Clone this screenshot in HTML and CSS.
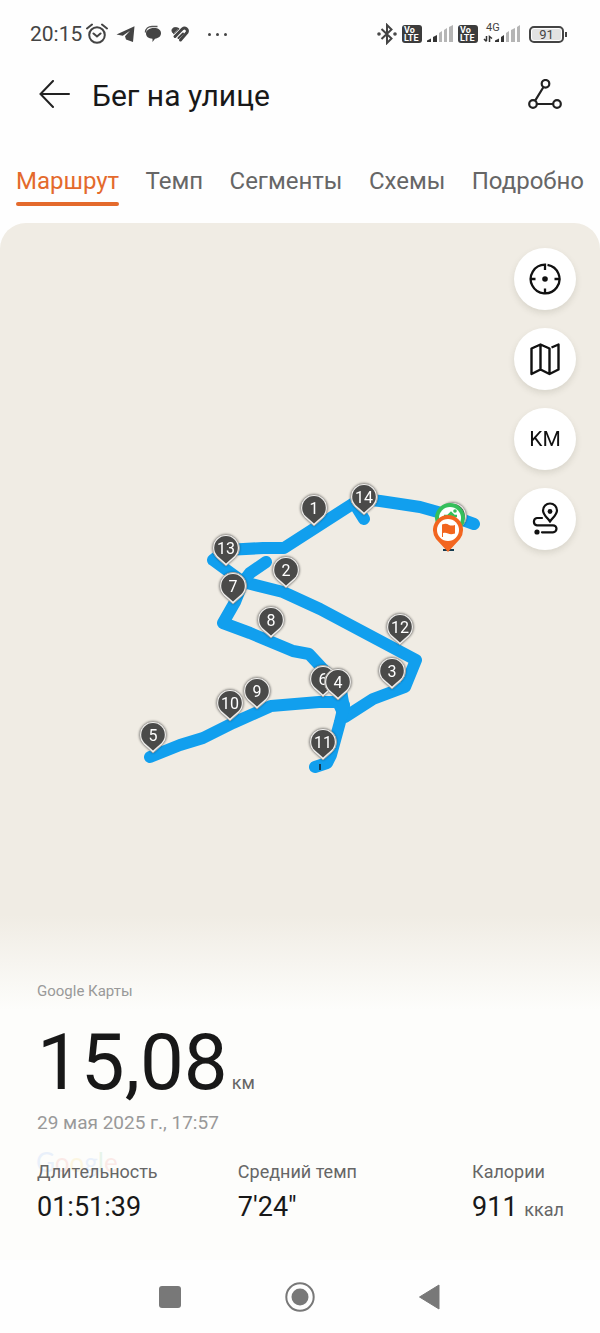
FILE: index.html
```html
<!DOCTYPE html>
<html lang="ru">

<head>
    <meta charset="UTF-8">
    <meta name="viewport" content="width=device-width, initial-scale=1.0">
    <title>Бег на улице</title>
    <link rel="stylesheet" href="styles.css">
</head>

<body>
    <div class="statusBar">
        <span class="clock">20:15</span>
        <div class="statusLeft">
            <!-- alarm -->
            <svg width="22" height="22" viewBox="0 0 22 22" fill="none" stroke="#444" stroke-width="2">
                <circle cx="11" cy="12" r="7.8" />
                <path d="M1 5.500 6 1.500M21 5.500 16 1.500M7.500 10.500l3.500 3 3.500-3" stroke-linecap="round" />
            </svg>
            <!-- telegram -->
            <svg width="20" height="18" viewBox="0 0 20 18" fill="#444">
                <path d="M.5 9.500 18.500 1.200 17 17 10 14.500 9 11.200 14 5.800 6.800 10.800Z" />
            </svg>
            <!-- chat -->
            <svg width="18" height="18" viewBox="0 0 18 18">
                <path d="M1.500 7.500C1.500 3.500 4.500 1.500 8 1.500h5.500" fill="none" stroke="#555" stroke-width="1.500" />
                <path d="M10 3c4.500 0 7 2 7 5.300 0 3-2.500 5-6 5.400L8.500 17v-3.200C4.500 13.500 2 11.500 2 8.500S5 3 10 3Z" fill="#444" />
            </svg>
            <!-- health -->
            <svg width="20" height="18" viewBox="0 0 20 18" fill="none" stroke="#444" stroke-width="3" stroke-linecap="round">
                <path d="M5 11.500 12.500 3.800c2.500-2 6 .5 4.500 3.700L10.500 15" />
                <path d="M8.500 13 13 8.500" stroke-width="2" />
                <path d="M3.500 8.500C-.5 5 3.500.500 8.800 3.500Z" fill="#444" stroke-width="1" />
            </svg>
            <span class="dots"><i></i><i></i><i></i></span>
        </div>
        <div class="statusRight">
            <!-- bluetooth -->
            <svg width="20" height="22" viewBox="0 0 20 22" fill="none" stroke="#444" stroke-width="2">
                <path d="M4.500 6 14.500 15.500 10 20V2l4.500 4.500L4.500 16" />
                <circle cx="2" cy="11" r=".8" />
                <circle cx="18" cy="11" r=".8" />
            </svg>
            <span class="volte"><span>Vo</span><span>LTE</span></span>
            <svg width="26" height="18" viewBox="0 0 26 18">
                <path d="M0 17v-1.500l4-2V17ZM6 17v-5l4-2v7Z" fill="#333" />
                <path d="M12 17V8l3-2v11ZM17 17V5l3-2v14ZM22 17V2l4-2v17Z" fill="#b5b5b5" />
            </svg>
            <span class="volte"><span>Vo</span><span>LTE</span></span>
            <div class="mobile">
                <span class="netType">4G</span>
                <svg width="38" height="18" viewBox="0 0 38 18">
                    <path d="M3.500 11v5M1 14l2.500 2.500M6.500 17v-5.500l2.500 2" fill="none" stroke="#333" stroke-width="1.500" />
                    <path d="M12 17v-1.500l4-2V17ZM18 17v-5l3-2v7Z" fill="#333" />
                    <path d="M23 17V8l3-2v11ZM28 17V5l4-2v14ZM34 17V2l3-2v17Z" fill="#b5b5b5" />
                </svg>
            </div>
            <span class="battery"><span class="charge">91</span></span>
        </div>
    </div>

    <header>
        <button class="iconBtn" aria-label="Назад">
            <svg width="32" height="30" viewBox="0 0 32 30" fill="none" stroke="#222" stroke-width="2" stroke-linecap="round">
                <path d="M1.500 14H30M14 1 1.500 14 14 27" />
            </svg>
        </button>
        <h1>Бег на улице</h1>
        <button class="iconBtn" aria-label="Поделиться">
            <svg width="36" height="32" viewBox="0 0 36 32" fill="none" stroke="#222" stroke-width="2.200">
                <circle cx="18.500" cy="4.800" r="3.800" />
                <circle cx="6" cy="25" r="3.800" />
                <circle cx="30" cy="25" r="3.800" />
                <path d="M16.500 8 8 21.800M10 25h16" />
            </svg>
        </button>
    </header>

    <nav class="tabs">
        <a href="#route" class="active">Маршрут</a>
        <a href="#pace">Темп</a>
        <a href="#segments">Сегменты</a>
        <a href="#charts">Схемы</a>
        <a href="#details">Подробно</a>
    </nav>

    <main id="route">
        <div class="map">
            <svg class="track" viewBox="0 223 600 682">
                <defs>
                    <g id="pin">
                        <path d="M0 18-9.500 9.500A13.500 13.500 0 1 1 9.500 9.500Z" fill="#eeedeb" stroke="#aaa7a2" stroke-width="1" />
                        <path d="M0 15.500-8.500 8A11.800 11.800 0 1 1 8.500 8Z" fill="#4a4a49" />
                    </g>
                </defs>

                <!-- route line -->
                <g class="line">
                    <path d="M474 524 452 516 420 507 380 501 362 499 354 503 284 548 263 548 226 550 213 560 243 582 283 592 320 609 416 660 405 687 373 699 345 717 338 702" />
                    <path d="M354 503 364 519" />
                    <path d="M150 757 180 745 203 738 233 723 271 706 319 702 338 702 344 708 340 685 322 668 309 654 293 651 250 633 223 623 235 602 243 582 250 573 266 562" />
                    <path d="M344 705 340 722 331 755 327 763 315 767" />
                </g>
                <path d="M319 764h2v6h-2ZM443 549h11v2h-11Z" fill="#163b50" />

                <!-- kilometre marks -->
                <g class="marks">
                    <g transform="translate(314 508)"><use href="#pin" /><text y="6">1</text></g>
                    <g transform="translate(364 497)"><use href="#pin" /><text y="6">14</text></g>
                    <g transform="translate(226 548)"><use href="#pin" /><text y="6">13</text></g>
                    <g transform="translate(286 570)"><use href="#pin" /><text y="6">2</text></g>
                    <g transform="translate(233 586)"><use href="#pin" /><text y="6">7</text></g>
                    <g transform="translate(271 620)"><use href="#pin" /><text y="6">8</text></g>
                    <g transform="translate(400 627)"><use href="#pin" /><text y="6">12</text></g>
                    <g transform="translate(392 671)"><use href="#pin" /><text y="6">3</text></g>
                    <g transform="translate(323 679)"><use href="#pin" /><text y="6">6</text></g>
                    <g transform="translate(338 682)"><use href="#pin" /><text y="6">4</text></g>
                    <g transform="translate(257 691)"><use href="#pin" /><text y="6">9</text></g>
                    <g transform="translate(230 703)"><use href="#pin" /><text y="6">10</text></g>
                    <g transform="translate(153 735)"><use href="#pin" /><text y="6">5</text></g>
                    <g transform="translate(323 742)"><use href="#pin" /><text y="6">11</text></g>
                    <use href="#pin" x="453" y="516" />
                </g>

                <!-- start and finish -->
                <g transform="translate(450 518)">
                    <path d="M0 22-12 9A15 15 0 1 1 12 9Z" fill="#35bf5b" />
                    <circle r="11" fill="#fff" />
                    <circle cx="5" cy="-7" r="1.800" fill="#35bf5b" />
                    <path d="M-6-2h4l3-3 3 3h3M1-3-4 3" fill="none" stroke="#35bf5b" stroke-width="2.500" />
                </g>
                <g transform="translate(448 530)">
                    <path d="M0 22-12 9A15 15 0 1 1 12 9Z" fill="#f2651f" />
                    <circle r="11" fill="#fff" />
                    <path d="M-6-5.500C-3-6.500-1-6.500 1-5 3-4 5-4.500 7-5V3.500C4 4.500 2 4.500 0 3.500-2 2.500-3 2.500-5 3V7H-6Z" fill="#f2651f" />
                </g>
            </svg>

            <div class="mapTools">
                <button aria-label="Центрировать">
                    <svg width="34" height="34" viewBox="0 0 34 34" fill="none" stroke="#111" stroke-width="2.300">
                        <path d="M19.500 2.800A14.400 14.400 0 1 1 17 2.600V8M17 26.500v5M2.500 17h5M26.500 17h5" />
                        <circle cx="17" cy="17" r="2.800" fill="#111" stroke="none" />
                    </svg>
                </button>
                <button aria-label="Тип карты">
                    <svg width="34" height="34" viewBox="0 0 34 34" fill="none" stroke="#111" stroke-width="2.400" stroke-linejoin="round">
                        <path d="M23.500 5.500 30.500 2.500V27.500L21.500 32 12.500 27.500 3.500 32V6.500L12.500 2.500 21.500 6.500V32M12.500 2.500V27.500" />
                    </svg>
                </button>
                <button>KM</button>
                <button aria-label="Анимация маршрута">
                    <svg width="34" height="34" viewBox="0 0 34 34" fill="none" stroke="#111" stroke-width="2.200" stroke-linecap="round">
                        <path d="M22 19.500C19 15.500 15 12.500 15 8.500a7 7 0 0 1 14 0c0 4-4 7-7 11Z" />
                        <circle cx="22" cy="9.500" r="2.400" fill="#111" stroke="none" />
                        <path d="M14 16H9a3.700 3.700 0 0 0 0 7.300h16a3.500 3.500 0 0 1 0 7H14" />
                        <circle cx="9" cy="30" r="2.600" fill="#111" stroke="none" />
                    </svg>
                </button>
            </div>
        </div>

        <section class="summary">
            <p class="provider">Google Карты</p>
            <p class="distance">15,08<span class="unit">км</span></p>
            <p class="date">29 мая 2025 г., 17:57</p>
            <div class="stats">
                <div class="watermark" aria-hidden="true"><span class="blue">G</span><span class="red">o</span><span class="yellow">o</span><span class="blue">g</span><span class="green">l</span><span class="red">e</span></div>
                <div class="stat">
                    <span class="label">Длительность</span>
                    <span class="value">01:51:39</span>
                </div>
                <div class="stat">
                    <span class="label">Средний темп</span>
                    <span class="value">7'24"</span>
                </div>
                <div class="stat">
                    <span class="label">Калории</span>
                    <span class="value">911 <span class="unit">ккал</span></span>
                </div>
            </div>
        </section>
    </main>

    <footer>
        <button aria-label="Недавние">
            <svg width="30" height="30" viewBox="0 0 30 30"><rect x="4" y="4" width="22" height="22" rx="3" fill="#787878" /></svg>
        </button>
        <button aria-label="Домой">
            <svg width="30" height="30" viewBox="0 0 30 30">
                <circle cx="15" cy="15" r="13.700" fill="none" stroke="#787878" stroke-width="2" />
                <circle cx="15" cy="15" r="8.500" fill="#787878" />
            </svg>
        </button>
        <button aria-label="Назад в системе">
            <svg width="30" height="30" viewBox="0 0 30 30"><path d="M4.500 15 24 3V27Z" fill="#787878" stroke="#787878" stroke-linejoin="round" /></svg>
        </button>
    </footer>
</body>

</html>
```

FILE: styles.css
```css
* {
    margin: 0;
    padding: 0;
    box-sizing: border-box;
}

body {
    display: flex;
    flex-direction: column;
    min-height: 100vh;
    background-color: #fefefe;
    color: #181818;
    font-family: Roboto, "Liberation Sans", sans-serif;
}

button {
    border: 0;
    background: none;
    font-family: inherit;
    color: inherit;
}

svg {
    display: block;
}

/* status bar */
.statusBar {
    display: flex;
    align-items: center;
    height: 68px;
    padding: 0 36px 0 30px;
    color: #444;
}

.clock {
    font-size: 21px;
}

.statusLeft {
    display: flex;
    align-items: center;
    gap: 8px;
    margin-left: 4px;
}

.dots {
    display: flex;
    gap: 5px;
    margin-left: 10px;
}

.dots i {
    width: 3px;
    height: 3px;
    border-radius: 50%;
    background-color: #444;
}

.statusRight {
    display: flex;
    align-items: center;
    gap: 5px;
    margin-left: auto;
}

.volte {
    display: flex;
    flex-direction: column;
    width: 20px;
    height: 18px;
    padding: 1px 2px;
    border-radius: 3px;
    background-color: #3c3c3c;
    color: #fff;
    font-size: 9px;
    font-weight: 700;
    line-height: 8px;
}

.mobile {
    position: relative;
}

.netType {
    position: absolute;
    left: 3px;
    top: -3px;
    font-size: 11px;
    line-height: 12px;
}

.battery {
    position: relative;
    height: 17px;
    width: 35px;
    margin-left: 3px;
    padding: 1px;
    border: 2px solid #444;
    border-radius: 5px;
}

.battery::after {
    content: "";
    position: absolute;
    right: -5px;
    top: 4px;
    width: 2px;
    height: 5px;
    background-color: #444;
}

.charge {
    display: block;
    border-radius: 2px;
    background-color: #e2e2e2;
    font-size: 13px;
    line-height: 11px;
    text-align: center;
}

/* header */
header {
    display: flex;
    align-items: center;
    gap: 21px;
    height: 54px;
    padding: 0 37px 0 39px;
}

header h1 {
    flex: 1;
    font-size: 30px;
    font-weight: 400;
}

/* tabs */
.tabs {
    display: flex;
    justify-content: space-between;
    padding: 42px 16px 17px;
}

.tabs a {
    padding-bottom: 4px;
    border-bottom: 4px solid transparent;
    color: #666;
    font-size: 24px;
    line-height: 34px;
    text-decoration: none;
}

.tabs .active {
    position: relative;
    color: #e46a2c;
}

.tabs .active::after {
    content: "";
    position: absolute;
    left: 0;
    right: 0;
    bottom: -4px;
    height: 4px;
    border-radius: 2px;
    background-color: #e46a2c;
}

/* map */
main {
    flex: 1;
    overflow: hidden;
    border-radius: 26px 26px 0 0;
    background-color: #fdfdfb;
}

.map {
    position: relative;
    background-color: #f0ece4;
}

.track {
    width: 100%;
    height: auto;
}

.line {
    fill: none;
    stroke: #119fee;
    stroke-width: 12px;
    stroke-linejoin: round;
    stroke-linecap: round;
}

.marks {
    fill: #fff;
    font-size: 16px;
    text-anchor: middle;
    filter: drop-shadow(0 0 1px rgba(0, 0, 0, 0.4));
}

.mapTools {
    position: absolute;
    top: 25px;
    right: 24px;
    display: flex;
    flex-direction: column;
    gap: 18px;
}

.mapTools button {
    display: flex;
    align-items: center;
    justify-content: center;
    width: 62px;
    height: 62px;
    border-radius: 50%;
    background-color: #fff;
    box-shadow: 0 3px 6px rgba(80, 80, 60, 0.15);
    color: #111;
    font-size: 21px;
}

/* summary */
.summary {
    padding: 76px 36px 34px 37px;
    background: linear-gradient(#f0ece4 10px, #fdfdfb 105px);
}

.provider {
    color: #999;
    font-size: 15px;
    line-height: 20px;
}

.distance {
    margin-top: 16px;
    font-size: 78px;
    line-height: 92px;
}

.unit {
    color: #666;
    font-size: 18px;
    line-height: 20px;
}

.distance .unit {
    margin-left: 4px;
}

.date {
    margin-top: 2px;
    color: #999;
    font-size: 19px;
    line-height: 24px;
}

.stats {
    position: relative;
    display: grid;
    grid-template-columns: 6fr 7fr auto;
    margin-top: 25px;
}

.stat {
    position: relative;
    display: flex;
    flex-direction: column;
    gap: 6px;
}

.label {
    color: #666;
    font-size: 18px;
    line-height: 24px;
}

.value {
    font-size: 27px;
    line-height: 34px;
}

/* map logo under the fading panel */
.watermark {
    position: absolute;
    left: -1px;
    top: -12px;
    font-family: Lato, sans-serif;
    font-size: 26px;
    line-height: 28px;
    opacity: 0.1;
}

.blue {
    color: #4285f4;
}

.red {
    color: #ea4335;
}

.yellow {
    color: #fbbc05;
}

.green {
    color: #34a853;
}

/* system buttons */
footer {
    display: flex;
    justify-content: center;
    gap: 100px;
    padding: 22px 0 21px;
}
```
